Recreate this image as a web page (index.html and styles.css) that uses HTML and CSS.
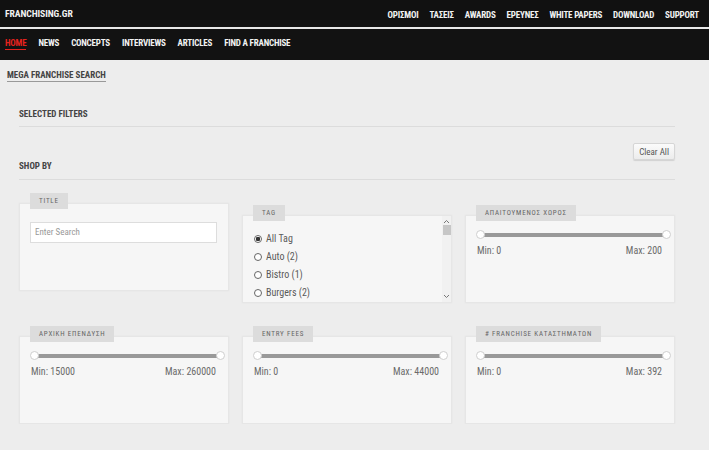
FILE: index.html
```html
<!DOCTYPE html>
<html>
<head>
    <meta charset="UTF-8">
    <title>Franchising.gr - Mega Franchise Search</title>
    <link rel="stylesheet" href="styles.css">
</head>
<body>
    <header>
        <div class="topbar">
            <a class="brand" href="#">FRANCHISING.GR</a>
            <nav class="topnav">
                <a href="#">ΟΡΙΣΜΟΙ</a>
                <a href="#">ΤΑΣΕΙΣ</a>
                <a href="#">AWARDS</a>
                <a href="#">ΕΡΕΥΝΕΣ</a>
                <a href="#">WHITE PAPERS</a>
                <a href="#">DOWNLOAD</a>
                <a href="#">SUPPORT</a>
            </nav>
        </div>
        <nav class="mainnav">
            <a href="#" class="active">HOME</a>
            <a href="#">NEWS</a>
            <a href="#">CONCEPTS</a>
            <a href="#">INTERVIEWS</a>
            <a href="#">ARTICLES</a>
            <a href="#">FIND A FRANCHISE</a>
        </nav>
    </header>
    <main>
        <div class="crumb"><span>MEGA FRANCHISE SEARCH</span></div>
        <section class="search">
            <h3 class="block-title">SELECTED FILTERS</h3>
            <div class="clear-row"><button class="btn-clear">Clear All</button></div>
            <h3 class="block-title shop">SHOP BY</h3>

            <div class="filters">
                <div class="filter">
                    <div class="filter-label">TITLE</div>
                    <div class="filter-box padded">
                        <input type="text" class="search-input" placeholder="Enter Search">
                    </div>
                </div>
                <div class="filter lower">
                    <div class="filter-label">TAG</div>
                    <div class="filter-box tag-box">
                        <ul class="tag-list">
                            <li><input type="radio" name="tag" checked> All Tag</li>
                            <li><input type="radio" name="tag"> Auto (2)</li>
                            <li><input type="radio" name="tag"> Bistro (1)</li>
                            <li><input type="radio" name="tag"> Burgers (2)</li>
                        </ul>
                        <div class="scrollbar">
                            <svg width="7" height="5" viewBox="0 0 7 5"><path d="M1 4 L3.5 1.5 L6 4" fill="none" stroke="#777" stroke-width="1"/></svg>
                            <div class="thumb"></div>
                            <div class="track"></div>
                            <svg width="7" height="5" viewBox="0 0 7 5"><path d="M1 1 L3.5 3.5 L6 1" fill="none" stroke="#777" stroke-width="1"/></svg>
                        </div>
                    </div>
                </div>
                <div class="filter lower">
                    <div class="filter-label">ΑΠΑΙΤΟΥΜΕΝΟΣ ΧΩΡΟΣ</div>
                    <div class="filter-box">
                        <div class="slider"><span class="handle left"></span><span class="handle right"></span></div>
                        <div class="range"><span>Min: 0</span><span>Max: 200</span></div>
                    </div>
                </div>
            </div>

            <div class="filters second">
                <div class="filter">
                    <div class="filter-label">ΑΡΧΙΚΗ ΕΠΕΝΔΥΣΗ</div>
                    <div class="filter-box">
                        <div class="slider"><span class="handle left"></span><span class="handle right"></span></div>
                        <div class="range"><span>Min: 15000</span><span>Max: 260000</span></div>
                    </div>
                </div>
                <div class="filter">
                    <div class="filter-label">ENTRY FEES</div>
                    <div class="filter-box">
                        <div class="slider"><span class="handle left"></span><span class="handle right"></span></div>
                        <div class="range"><span>Min: 0</span><span>Max: 44000</span></div>
                    </div>
                </div>
                <div class="filter">
                    <div class="filter-label"># FRANCHISE ΚΑΤΑΣΤΗΜΑΤΩΝ</div>
                    <div class="filter-box">
                        <div class="slider"><span class="handle left"></span><span class="handle right"></span></div>
                        <div class="range"><span>Min: 0</span><span>Max: 392</span></div>
                    </div>
                </div>
            </div>
        </section>
    </main>
</body>
</html>
```

FILE: styles.css
```css
body {
    font-family: "Roboto Condensed", "Liberation Sans Narrow", "DejaVu Sans Condensed", Roboto, sans-serif;
    margin: 0;
    padding: 0;
    background-color: #ededed;
    color: #444;
}
a {
    text-decoration: none;
}
.topbar {
    height: 27px;
    background-color: #111;
    border-bottom: 2px solid #e8e8e8;
    display: flex;
    justify-content: space-between;
    align-items: center;
    padding: 0 10px 0 5px;
}
.brand {
    color: #f2f2f2;
    font-size: 9.7px;
    font-weight: bold;
    letter-spacing: -0.1px;
}
.topnav {
    display: flex;
    gap: 11px;
    padding-top: 2px;
}
.topnav a, .mainnav a {
    color: #f2f2f2;
    font-size: 9px;
    font-weight: bold;
    letter-spacing: -0.2px;
    white-space: nowrap;
}
.mainnav {
    height: 23px;
    padding: 8px 0 0 5px;
    background-color: #121212;
    display: flex;
    align-items: flex-start;
    gap: 12px;
}
.mainnav a {
    line-height: 12px;
}
.mainnav a.active {
    color: #e3231e;
    border-bottom: 1px solid #e3231e;
}
.crumb {
    display: flex;
    padding: 9px 0 0 7px;
}
.crumb span {
    font-size: 9px;
    font-weight: bold;
    line-height: 12px;
    color: #444;
    border-bottom: 1px solid #999;
}
.search {
    width: 656px;
    margin: 26px 0 0 19px;
}
.block-title {
    margin: 0;
    font-size: 9px;
    line-height: 12px;
    font-weight: bold;
    color: #444;
    padding-bottom: 6px;
    border-bottom: 1px solid #dcdcdc;
}
.block-title.shop {
    padding-bottom: 7px;
}
.clear-row {
    display: flex;
    justify-content: flex-end;
    margin-top: 16px;
    height: 17px;
}
.btn-clear {
    font-family: inherit;
    font-size: 9px;
    color: #555;
    height: 17px;
    padding: 0 5px;
    border: 1px solid #d6d6d6;
    border-radius: 2px;
    background: linear-gradient(#fbfbfb, #ececec);
    box-shadow: 0 1px 1px rgba(0, 0, 0, 0.12);
}
.filters {
    display: flex;
    align-items: flex-start;
    gap: 13px;
    margin-top: 13px;
}
.filters.second {
    margin-top: 23px;
}
.filter {
    width: 210px;
    display: flex;
    flex-direction: column;
    align-items: flex-start;
}
.filter.lower {
    margin-top: 12px;
}
.filter-label {
    position: relative;
    z-index: 1;
    margin: 0 0 -6px 11px;
    height: 16px;
    line-height: 16px;
    padding: 0 9px;
    background-color: #dcdcdc;
    color: #666;
    font-size: 7px;
    letter-spacing: 0.8px;
}
.filter-box {
    box-sizing: border-box;
    width: 210px;
    height: 88px;
    background-color: #f6f6f6;
    border: 1px solid #e6e6e6;
    box-shadow: 0 0 2px rgba(0, 0, 0, 0.04);
}
.filter-box.padded {
    padding: 16px 11px 0 10px;
}
.search-input {
    box-sizing: border-box;
    width: 100%;
    height: 21px;
    border: 1px solid #ddd;
    background: #fff;
    padding: 0 4px;
    font-family: inherit;
    font-size: 9px;
    color: #444;
    outline: none;
}
.search-input::placeholder {
    color: #999;
}
.tag-box {
    display: flex;
    overflow: hidden;
}
.tag-list {
    flex: 1;
    list-style: none;
    margin: 0;
    padding: 14px 0 0 11px;
}
.tag-list li {
    height: 18px;
    line-height: 18px;
    font-size: 10px;
    color: #5a5a5a;
    display: flex;
    align-items: center;
    gap: 4px;
}
.tag-list input {
    appearance: none;
    -webkit-appearance: none;
    margin: 0;
    width: 8px;
    height: 8px;
    border: 1px solid #666;
    border-radius: 50%;
    background: #fff;
}
.tag-list input:checked {
    background: radial-gradient(circle, #333 0 2px, #fff 2.5px);
}
.scrollbar {
    width: 9px;
    background-color: #f1f1f1;
    display: flex;
    flex-direction: column;
    align-items: center;
    padding: 3px 0 3px;
}
.scrollbar .thumb {
    width: 8px;
    height: 10px;
    margin-top: 1px;
    background-color: #c6c6c6;
}
.scrollbar .track {
    flex: 1;
}
.slider {
    position: relative;
    height: 4px;
    margin: 17px 8px 0 15px;
    background-color: #999;
    border-radius: 2px;
}
.handle {
    position: absolute;
    top: -3px;
    width: 9px;
    height: 9px;
    box-sizing: border-box;
    border: 1px solid #cfcfcf;
    border-radius: 50%;
    background: #fff;
}
.handle.left {
    left: -5px;
}
.handle.right {
    right: -5px;
}
.range {
    display: flex;
    justify-content: space-between;
    margin-top: 8px;
    padding: 0 12px 0 11px;
    font-size: 10px;
    line-height: 12px;
    color: #6a6a6a;
}
```
